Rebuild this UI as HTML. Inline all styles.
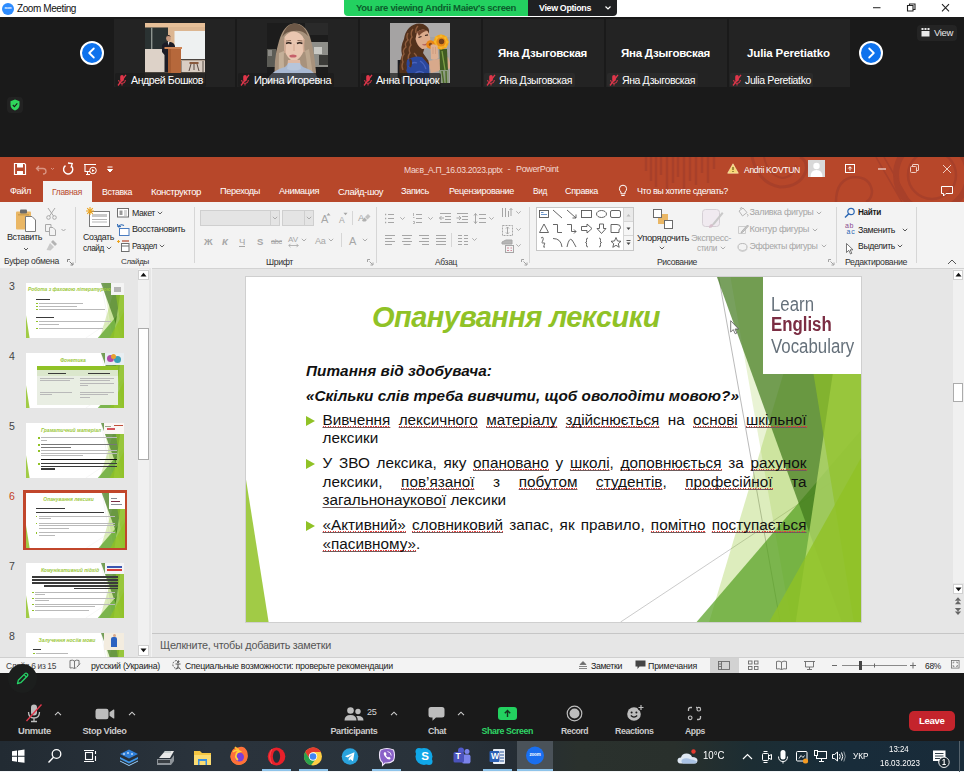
<!DOCTYPE html>
<html lang="uk">
<head>
<meta charset="utf-8">
<title>Zoom Meeting</title>
<style>
html,body{margin:0;padding:0;}
body{width:964px;height:772px;overflow:hidden;position:relative;background:#1a1a1a;font-family:"Liberation Sans","DejaVu Sans",sans-serif;}
.abs{position:absolute;}
.t{position:absolute;white-space:nowrap;line-height:1;}
svg{position:absolute;overflow:visible;}
.tile{position:absolute;top:19px;height:68px;width:121px;background:#232323;overflow:hidden;}
.lblbg{position:absolute;top:73px;height:14px;background:rgba(28,28,28,.72);border-radius:2px;}
.navb{position:absolute;width:20px;height:20px;border-radius:50%;background:#0e72ed;border:2px solid #fff;}
.sep{position:absolute;width:1px;background:#d6d6d6;}
.thumb{position:absolute;left:26px;width:98px;height:55px;background:#fff;overflow:hidden;}
</style>
</head>
<body>
<!-- ============ ZOOM TITLE BAR ============ -->
<div class="abs" style="left:0;top:0;width:964px;height:17px;background:#fff;"></div>
<div class="abs" style="left:2px;top:2.500px;width:12px;height:12px;border-radius:50%;background:#2d8cff;"></div>
<span class="t" style="left:4.5px;top:7.1px;font-size:2.8px;color:#fff;letter-spacing:-0.08px;font-weight:bold;">zoom</span>
<span class="t" style="left:17px;top:3.5px;font-size:10px;color:#111;letter-spacing:-0.41px;">Zoom Meeting</span>
<div class="abs" style="left:344px;top:0;width:184px;height:16px;background:#23d160;border-radius:0 0 0 4px;"></div>
<span class="t" style="left:356px;top:3.0px;font-size:9.5px;color:#0b5e2c;letter-spacing:-0.30px;font-weight:bold;">You are viewing Andrii Maiev's screen</span>
<div class="abs" style="left:528px;top:0;width:89px;height:16px;background:#1f2022;border-radius:0 0 4px 0;"></div>
<span class="t" style="left:539px;top:3.5px;font-size:8.9px;color:#fff;letter-spacing:-0.34px;font-weight:bold;">View Options</span>
<svg style="left:604px;top:5px" width="8" height="6" viewBox="0 0 8 6"><path d="M1.5 1.5 L4 4 L6.5 1.5" fill="none" stroke="#fff" stroke-width="1.2"/></svg>
<!-- window controls -->
<svg style="left:870px;top:0" width="84" height="16" viewBox="0 0 84 16">
 <path d="M3 7.700 H10.500" stroke="#333" stroke-width="1.100" fill="none"/>
 <path d="M37.500 5.500 h5.500 v5.500 h-5.500 z M39.500 5.500 v-1.500 h5.500 v5.500 h-2" stroke="#222" stroke-width="1.100" fill="none"/>
 <path d="M72 4.200 L79 11.300 M79 4.200 L72 11.300" stroke="#222" stroke-width="1.100" fill="none"/>
</svg>

<!-- ============ GALLERY STRIP ============ -->
<div class="navb" style="left:80px;top:41px;"></div>
<svg style="left:80px;top:41px" width="24" height="24" viewBox="0 0 24 24"><path d="M13.8 7.5 L9.2 12 L13.8 16.5" fill="none" stroke="#fff" stroke-width="1.8" stroke-linecap="round" stroke-linejoin="round"/></svg>
<div class="navb" style="left:859px;top:41px;"></div>
<svg style="left:859px;top:41px" width="24" height="24" viewBox="0 0 24 24"><path d="M10.2 7.5 L14.8 12 L10.2 16.5" fill="none" stroke="#fff" stroke-width="1.8" stroke-linecap="round" stroke-linejoin="round"/></svg>

<div class="tile" style="left:114px;"></div>
<div class="tile" style="left:237px;"></div>
<div class="tile" style="left:360px;"></div>
<div class="tile" style="left:483px;"></div>
<div class="tile" style="left:606px;"></div>
<div class="tile" style="left:729px;"></div>

<!-- photo 1 : classroom -->
<svg style="left:145px;top:23px" width="60" height="60" viewBox="0 0 60 60">
 <defs><filter id="bl1" x="-5%" y="-5%" width="110%" height="110%"><feGaussianBlur stdDeviation=".55"/></filter><clipPath id="cp1"><rect width="60" height="60"/></clipPath></defs>
 <g clip-path="url(#cp1)"><g filter="url(#bl1)">
 <rect x="-2" y="-2" width="64" height="64" fill="#dcb691"/>
 <rect x="-2" y="-2" width="64" height="6" fill="#e6bf98"/>
 <rect x="-2" y="4.500" width="25" height="21.500" fill="#2b3132"/>
 <rect x="6" y="4.500" width="1.400" height="21.500" fill="#8d9590"/>
 <rect x="-2" y="26" width="26" height="24" fill="#ddd2c8"/>
 <rect x="29.500" y="8" width="33" height="28" fill="#eef1f1"/>
 <rect x="29.500" y="36" width="33" height="1.500" fill="#4b4540"/>
 <rect x="29.500" y="37.500" width="33" height="12" fill="#d9cdc3"/>
 <rect x="44.500" y="39" width="9" height="2" fill="#8a5a3c"/><path d="M46 41 L44 48 M52 41 L54 48 M49 41 V47" stroke="#5a4a42" stroke-width="1"/>
 <path d="M36 38 V49 M58 38 V49" stroke="#5a5048" stroke-width="1"/>
 <rect x="-2" y="49" width="64" height="13" fill="#4d4641"/>
 <ellipse cx="23.500" cy="15.200" rx="2.300" ry="2.900" fill="#c79a80"/>
 <path d="M21 13.500 Q23.500 10.500 26 13.500 Q23.500 12.500 21 13.500 Z" fill="#2a2220"/>
 <path d="M17 22 Q19 19 22 19 L25.500 19 Q29 19.500 30 23 L30 29 L24 29 L24 49 L19.500 49 L19.500 32 L17 29 Z" fill="#1d1f25"/>
 <path d="M22.800 19 L23.600 22.500 L24.400 19 Z" fill="#e8e8ee"/>
 <path d="M19.500 24 H37 V26 H19.500 Z" fill="#cd8556"/>
 <path d="M23 26 H36 V50 H23 Z" fill="#b6683b"/>
 <path d="M23 26 H26 V50 H23 Z" fill="#a55c32"/>
 </g></g>
</svg>
<!-- photo 2 : girl long hair -->
<svg style="left:267px;top:23px" width="61" height="60" viewBox="0 0 61 60">
 <defs><filter id="bl2" x="-5%" y="-5%" width="110%" height="110%"><feGaussianBlur stdDeviation=".5"/></filter><clipPath id="cp2"><rect width="61" height="60"/></clipPath></defs>
 <g clip-path="url(#cp2)"><g filter="url(#bl2)">
 <rect x="-2" y="-2" width="65" height="64" fill="#1d1d1c"/>
 <rect x="38" y="0" width="24" height="12" fill="#2c2c2b"/>
 <path d="M43 19 H62 V44 H46 Z" fill="#8e8e89"/><rect x="47" y="24" width="8" height="7" fill="#c9c9c4"/><rect x="52" y="32" width="10" height="10" fill="#3a3a38"/>
 <rect x="-2" y="26" width="11" height="18" fill="#5c5b57"/><rect x="1" y="27" width="4" height="6" fill="#8c8b86"/>
 <path d="M8 62 Q6 36 12 18 Q17 1 27 .5 Q38 0 43 14 Q48 30 50 62 Z" fill="#a8927c"/>
 <path d="M15 14 Q19 1 27 .500 Q37 .500 41 13 Q36 7 27 8 Q19 8 15 14 Z" fill="#6d5846"/>
 <path d="M12 30 Q11 46 13 62 L19 62 Q16 44 17 28 Z" fill="#c3af98"/>
 <path d="M38 28 Q41 44 41 62 L47 62 Q45 44 42 26 Z" fill="#bca78f"/>
 <path d="M17.500 14 Q22 8 27 8.500 Q34 9 37 16 L37 27 Q34 36 27 38.500 Q20 36 17.500 27 Z" fill="#e9c6b0"/>
 <path d="M19 20.500 Q21.500 19 24.500 20.500 M30 20.500 Q32.500 19 35.500 20.500" stroke="#2e211b" stroke-width="1.600" fill="none"/><path d="M19 18 L24 17.500 M30.500 17.500 L35.500 18" stroke="#7a5a46" stroke-width=".9"/><path d="M27 21 V28" stroke="#d4a890" stroke-width="1"/><path d="M17.500 16 Q19 24 18 30 M37 16 Q36 24 37 29" stroke="#d3ab94" stroke-width="1.500" fill="none"/>
 <ellipse cx="26" cy="33" rx="3.600" ry="1.500" fill="#c6616b"/>
 <path d="M21 37 L33 37 L34 46 L20 46 Z" fill="#dfb8a2"/>
 <path d="M-2 62 Q2 48 18 44 L22 40 L32 40 L36 44 Q50 48 54 62 Z" fill="#a9b9d2"/>
 <path d="M21 40 L33 40 L34 46 Q27 49 20 46 Z" fill="#b7c5da"/>
 </g></g>
</svg>
<!-- photo 3 : woman with sunflowers -->
<svg style="left:390px;top:23px" width="60" height="60" viewBox="0 0 60 60">
 <defs><filter id="bl3" x="-5%" y="-5%" width="110%" height="110%"><feGaussianBlur stdDeviation=".6"/></filter><clipPath id="cp3"><rect width="60" height="60"/></clipPath></defs>
 <g clip-path="url(#cp3)"><g filter="url(#bl3)">
 <rect x="-2" y="-2" width="64" height="64" fill="#a5a3a3"/>
 <rect x="34" y="-2" width="28" height="16" fill="#adabab"/>
 <rect x="7.700" y="37" width="3.500" height="25" fill="#1f1f21"/>
 <path d="M19 5 Q25 -1 33 1 Q40 4 39 10 L33 30 L40 40 L36 54 L10 54 Q8 42 12 32 Q10 24 14 16 Q15 9 19 5 Z" fill="#52301f"/>
 <path d="M18 10 Q16 14 18 17 Q14 20 16 24 Q12 27 14 31 Q11 35 13 39 Q11 43 13 47 M23 6 Q20 10 22 14 Q19 18 21 22 Q18 26 20 30 Q17 34 19 38 M28 3 Q25 6 26 10 M24 30 Q28 33 26 37 Q30 40 28 44 Q31 47 30 51" stroke="#8e5c3a" stroke-width="1.400" fill="none"/>
 <path d="M27 9 Q32 4.500 37.500 8 Q41 13 40 20 Q38 26.500 32 26 Q27 23 25.500 16 Z" fill="#dcab8c"/>
 <path d="M27 9 Q32 4.500 37.500 8 Q33 8 29 13 Z" fill="#7a4a30"/>
 <path d="M28.500 14.500 L31.500 13.500 M35 12.500 L38 11.800" stroke="#3a241c" stroke-width="1.200"/><path d="M32.500 21.500 Q35.500 22.500 37.500 20.500" stroke="#b05a58" stroke-width="1.200" fill="none"/>
 <path d="M17 37 Q24 32 32 34 L39 42 L40 62 L14 62 Z" fill="#2c469c"/>
 <path d="M19 44 Q22 38 27 40 M24 52 Q28 46 34 50 M30 38 Q34 40 36 46" stroke="#4763bd" stroke-width="1.300" fill="none"/>
 <path d="M14 40 Q17 44 15 48 Q18 52 16 56 M20 36 Q22 40 20 44" stroke="#52301f" stroke-width="2.200" fill="none"/>
 <path d="M38.500 38 L58 34 L62 45 L41 50 Z" fill="#d8a98b"/>
 <path d="M49.500 26 L57 26 L58 48 L50 48 Z" fill="#3f5c22"/><path d="M52 28 L55 47" stroke="#7fa046" stroke-width="1.300"/>
 <path d="M49 47 H59 V62 H49 Z" fill="#8d9c82"/><path d="M52 48 L54 62 M56 48 L56.500 62" stroke="#4f6e2b" stroke-width="1.500"/>
 <circle cx="51" cy="19" r="7.600" fill="#f2a61f"/><path d="M51 11 L53 15 L57 13 L56 17 L59.500 19 L56 21 L57 25 L53 23 L51 27 L49 23 L45 25 L46 21 L42.500 19 L46 17 L45 13 L49 15 Z" fill="#f6b82c"/><circle cx="51" cy="19" r="4.600" fill="#e88a16"/><circle cx="51.500" cy="18.500" r="2.700" fill="#74431a"/>
 <circle cx="40.500" cy="21.500" r="4.300" fill="#e98618"/><circle cx="40.500" cy="21.500" r="1.700" fill="#8a4a18"/>
 <path d="M40.500 22 Q44 20 47.500 23 L48.500 35 Q45 38 41 36 Z" fill="#deb092"/>
 <path d="M43 24 V31 M45.500 24 V31" stroke="#c9977a" stroke-width=".7"/>
 </g></g>
</svg>

<!-- name labels -->
<div class="lblbg" style="left:115px;width:91px;"></div>
<div class="lblbg" style="left:238px;width:96px;"></div>
<div class="lblbg" style="left:361px;width:80px;"></div>
<div class="lblbg" style="left:484px;width:91px;background:#2a2a2a;"></div>
<div class="lblbg" style="left:607px;width:91px;background:#2a2a2a;"></div>
<div class="lblbg" style="left:730px;width:83px;background:#2a2a2a;"></div>
<span class="t" style="left:131px;top:75.0px;font-size:10.6px;color:#fff;letter-spacing:-0.41px;">Андрей Бошков</span>
<span class="t" style="left:254px;top:74.7px;font-size:11px;color:#fff;letter-spacing:-0.46px;">Ирина Игоревна</span>
<span class="t" style="left:376px;top:74.7px;font-size:11px;color:#fff;letter-spacing:-0.47px;">Анна Процюк</span>
<span class="t" style="left:499px;top:75.1px;font-size:10.5px;color:#fff;letter-spacing:-0.39px;">Яна Дзыговская</span>
<span class="t" style="left:622px;top:75.1px;font-size:10.5px;color:#fff;letter-spacing:-0.39px;">Яна Дзыговская</span>
<span class="t" style="left:745px;top:75.1px;font-size:10.5px;color:#fff;letter-spacing:-0.36px;">Julia Peretiatko</span>
<span class="t" style="left:498px;top:48.3px;font-size:11.5px;color:#fff;letter-spacing:-0.25px;font-weight:bold;">Яна Дзыговская</span>
<span class="t" style="left:621px;top:48.3px;font-size:11.5px;color:#fff;letter-spacing:-0.25px;font-weight:bold;">Яна Дзыговская</span>
<span class="t" style="left:747px;top:48.3px;font-size:11.5px;color:#fff;letter-spacing:-0.13px;font-weight:bold;">Julia Peretiatko</span>
<!-- muted mic icons -->
<svg style="left:117px;top:74px" width="740" height="13" viewBox="0 0 740 13">
 <defs><g id="mm"><rect x="3.2" y="1" width="3.6" height="6.5" rx="1.8" fill="#e0364a"/><path d="M1.6 6 Q1.6 9.4 5 9.4 Q8.4 9.4 8.4 6 M5 9.4 V11.5" stroke="#e0364a" stroke-width="1" fill="none"/><path d="M1 11.5 L9 .8" stroke="#e0364a" stroke-width="1.3"/></g></defs>
 <use href="#mm" x="0"/><use href="#mm" x="123"/><use href="#mm" x="246"/><use href="#mm" x="369"/><use href="#mm" x="492"/><use href="#mm" x="615"/>
</svg>

<!-- View button -->
<div class="abs" style="left:917px;top:25px;width:40px;height:16px;background:#242424;border-radius:4px;"></div>
<svg style="left:921px;top:28px" width="9" height="9" viewBox="0 0 9 9"><path d="M.5 0 h2 v2 h-2z M3.5 0 h2 v2 h-2z M6.5 0 h2 v2 h-2z M.5 3 h8 v5.5 h-8z" fill="#e8e8e8"/></svg>
<span class="t" style="left:934px;top:27.7px;font-size:9.5px;color:#e8e8e8;letter-spacing:-0.36px;">View</span>

<!-- shield -->
<div class="abs" style="left:7px;top:97px;width:16px;height:16px;background:#222;border-radius:4px;"></div>
<svg style="left:10px;top:99px" width="10" height="12" viewBox="0 0 10 12"><path d="M5 .5 L9.5 2.2 V6 Q9.5 9.5 5 11.5 Q.5 9.5 .5 6 V2.2 Z" fill="#2fd65c"/><path d="M2.8 6 L4.4 7.6 L7.3 4.4" stroke="#1a1a1a" stroke-width="1.1" fill="none"/></svg>
<!-- ============ POWERPOINT WINDOW ============ -->
<div class="abs" style="left:0;top:157px;width:964px;height:516px;background:#e6e6e6;"></div>
<div class="abs" style="left:0;top:157px;width:964px;height:45px;background:#b7472a;"></div>
<!-- office background art -->
<svg style="left:640px;top:157px" width="324" height="45" viewBox="0 0 324 45">
 <defs><clipPath id="cpt"><rect width="324" height="45"/></clipPath></defs>
 <g clip-path="url(#cpt)" fill="none" stroke="#a8402a">
  <path d="M6 0 V14 M11 0 V24 M16 0 V30 M21 0 V18 M27 0 V32 M33 0 V26 M38 0 V20 M44 0 V34 M50 0 V24 M56 0 V28 M62 0 V16 M68 0 V26 M74 0 V12" stroke-width="2.500"/>
  <path d="M112 0 Q118 26 140 30 Q160 30 166 14 Q168 4 160 0" stroke-width="3"/>
  <path d="M124 0 Q128 18 142 21 Q154 20 156 8" stroke-width="2"/>
  <path d="M196 45 Q196 22 214 20 Q230 20 232 34 Q232 42 226 45" stroke-width="2.500"/>
  <circle cx="292" cy="18" r="36" stroke-width="6"/><circle cx="292" cy="18" r="24" stroke-width="2.500"/>
  <path d="M236 0 L262 45 M244 0 L270 45" stroke-width="1.500"/>
 </g>
</svg>
<!-- QAT -->
<svg style="left:10px;top:161px" width="110" height="16" viewBox="0 0 110 16">
 <path d="M4.5 2.5 h10 l1 1 v10 h-11 z" fill="none" stroke="#fff" stroke-width="1.2"/><rect x="7" y="2.5" width="6" height="4" fill="#fff"/><rect x="7" y="10" width="6" height="3.5" fill="#fff"/>
 <path d="M29 5 L26.5 7.5 L29 10 M27 7.5 H33 Q36 7.5 36 10.5 Q36 13 33 13" fill="none" stroke="#d99583" stroke-width="1.3"/>
 <path d="M41 7 L42.5 8.5 L44 7" fill="none" stroke="#d99583" stroke-width="1"/>
 <path d="M61.5 5.2 A4.6 4.6 0 1 1 55.5 4.6" fill="none" stroke="#fff" stroke-width="1.4"/><path d="M58 2 L62.2 2.6 L61 6.6" fill="none" stroke="#fff" stroke-width="1.3"/>
 <path d="M74 3.5 H86 M75 3.5 V10.5 H80 M77.5 10.5 V13.5 M76 13.5 H80" fill="none" stroke="#fff" stroke-width="1.1"/><circle cx="83" cy="9.5" r="3.3" fill="none" stroke="#fff" stroke-width="1"/><path d="M82 8 L84.5 9.5 L82 11 Z" fill="#fff"/>
 <path d="M97.5 6 H102.5 M97.5 8.5 L100 11 L102.5 8.5 Z" fill="#fff" stroke="#fff" stroke-width="1"/>
</svg>
<span class="t" style="left:404px;top:165.5px;font-size:8.6px;color:#f3d9d1;letter-spacing:-0.33px;">Маєв_А.П_16.03.2023.pptx</span>
<span class="t" style="left:507.5px;top:165.0px;font-size:9.2px;color:#f3d9d1;letter-spacing:-0.06px;">-</span>
<span class="t" style="left:516px;top:165.2px;font-size:9px;color:#f3d9d1;letter-spacing:-0.35px;">PowerPoint</span>
<svg style="left:727px;top:163px" width="12" height="11" viewBox="0 0 12 11"><path d="M6 .8 L11.3 10.2 H.7 Z" fill="#f7d774" stroke="#fff3c4" stroke-width=".6"/><path d="M6 4 V7 M6 8 V9" stroke="#5a4a10" stroke-width="1.1"/></svg>
<span class="t" style="left:744px;top:165.5px;font-size:8.6px;color:#fff;letter-spacing:-0.32px;">Andrii KOVTUN</span>
<div class="abs" style="left:808px;top:160px;width:17px;height:17px;background:#d9d9d9;"></div>
<svg style="left:808px;top:160px" width="17" height="17" viewBox="0 0 17 17"><circle cx="8.5" cy="6" r="3.2" fill="#fff"/><path d="M2.5 17 Q2.5 10 8.5 10 Q14.5 10 14.5 17 Z" fill="#fff"/></svg>
<svg style="left:843px;top:162px" width="112" height="14" viewBox="0 0 112 14">
 <rect x="2.5" y="2.5" width="9" height="8" fill="none" stroke="#fff" stroke-width="1"/><path d="M7 8.5 V5 M5.3 6.5 L7 4.7 L8.7 6.5" stroke="#fff" stroke-width="1" fill="none"/>
 <path d="M35 7 H43" stroke="#fff" stroke-width="1"/>
 <rect x="67.5" y="4.500" width="6" height="6" rx="1" fill="none" stroke="#f0cfc5" stroke-width="1"/><path d="M69.500 4.500 V3 Q69.500 2.500 70 2.500 H75 Q75.500 2.500 75.500 3 V8 Q75.500 8.500 75 8.500 H73.500" fill="none" stroke="#f0cfc5" stroke-width="1"/>
 <path d="M100 3 L108 11 M108 3 L100 11" stroke="#f0cfc5" stroke-width="1"/>
</svg>
<!-- tabs -->
<div class="abs" style="left:43px;top:181px;width:49px;height:21px;background:#f3f3f3;"></div>
<span class="t" style="left:10px;top:187.2px;font-size:9.2px;color:#fff;letter-spacing:-0.40px;">Файл</span>
<span class="t" style="left:52px;top:187.9px;font-size:8.4px;color:#b7472a;letter-spacing:-0.27px;">Главная</span>
<span class="t" style="left:102px;top:187.6px;font-size:8.8px;color:#fff;letter-spacing:-0.39px;">Вставка</span>
<span class="t" style="left:151px;top:186.9px;font-size:9.6px;color:#fff;letter-spacing:-0.43px;">Конструктор</span>
<span class="t" style="left:220px;top:187.2px;font-size:9.2px;color:#fff;letter-spacing:-0.39px;">Переходы</span>
<span class="t" style="left:279px;top:187.2px;font-size:9.2px;color:#fff;letter-spacing:-0.39px;">Анимация</span>
<span class="t" style="left:338px;top:187.0px;font-size:9.4px;color:#fff;letter-spacing:-0.40px;">Слайд-шоу</span>
<span class="t" style="left:401px;top:187.2px;font-size:9.2px;color:#fff;letter-spacing:-0.36px;">Запись</span>
<span class="t" style="left:449px;top:187.4px;font-size:9px;color:#fff;letter-spacing:-0.32px;">Рецензирование</span>
<span class="t" style="left:533px;top:188.1px;font-size:8.2px;color:#fff;letter-spacing:-0.27px;">Вид</span>
<span class="t" style="left:565px;top:187.4px;font-size:9px;color:#fff;letter-spacing:-0.33px;">Справка</span>
<svg style="left:618px;top:184px" width="10" height="14" viewBox="0 0 10 14"><path d="M5 1.2 Q8.6 1.2 8.6 4.7 Q8.6 6.5 7 8 V9.8 H3 V8 Q1.4 6.5 1.4 4.700 Q1.4 1.2 5 1.2 Z M3.3 11.5 H6.7" fill="none" stroke="#fff" stroke-width="1"/></svg>
<span class="t" style="left:637px;top:187.4px;font-size:9px;color:#fff;letter-spacing:-0.39px;">Что вы хотите сделать?</span>
<svg style="left:940px;top:185px" width="14" height="13" viewBox="0 0 14 13"><path d="M1.5 1.5 H12.5 V8.5 H6 L3.5 11 V8.5 H1.5 Z" fill="none" stroke="#fff" stroke-width="1"/></svg>
<!-- ============ RIBBON ============ -->
<div class="abs" style="left:0;top:202px;width:964px;height:66.600px;background:#f3f3f3;border-bottom:1px solid #d2d2d2;box-sizing:border-box;"></div>
<div class="sep" style="left:75px;top:207px;height:56px;"></div>
<div class="sep" style="left:194px;top:207px;height:56px;"></div>
<div class="sep" style="left:376px;top:207px;height:56px;"></div>
<div class="sep" style="left:529px;top:207px;height:56px;"></div>
<div class="sep" style="left:836px;top:207px;height:56px;"></div>
<div class="sep" style="left:916px;top:207px;height:56px;"></div>
<div class="sep" style="left:352px;top:211px;height:14px;"></div>
<div class="sep" style="left:341px;top:233px;height:14px;"></div>
<div class="sep" style="left:451px;top:233px;height:14px;"></div>

<!-- Clipboard group -->
<svg style="left:14px;top:207px" width="60" height="46" viewBox="0 0 60 46">
 <rect x="2" y="4.500" width="15" height="18" rx="1" fill="#eab765"/><rect x="6" y="2.500" width="7" height="4" rx="1" fill="#6b6b6b"/><rect x="4" y="7" width="11" height="1.500" fill="#cfa050"/>
 <path d="M11.500 9.500 H18 L21.500 13 V24.500 H11.500 Z" fill="#fff" stroke="#7a7a7a" stroke-width="1"/>
 <path d="M10 41 L12 43 L14 41" fill="none" stroke="#555" stroke-width="1"/>
 <!-- scissors (disabled) -->
 <g stroke="#a9a9a9" fill="none" stroke-width="1"><path d="M34 1 L39.500 9 M41 1 L35.500 9"/><circle cx="34.500" cy="10.500" r="1.800"/><circle cx="40.500" cy="10.500" r="1.800"/></g>
 <!-- copy (disabled) -->
 <g stroke="#a9a9a9" fill="none" stroke-width="1"><path d="M31.500 17.500 H37 V24.500 H31.500 Z"/><path d="M35.500 20.500 H39 L41.500 23 V28.500 H35.500 Z" fill="#f3f3f3"/></g>
 <path d="M47.500 22 L49.500 24 L51.500 22" fill="none" stroke="#a9a9a9" stroke-width="1"/>
 <!-- format painter (disabled) -->
 <g fill="#b3b3b3"><path d="M39 33 L43 37 L41 39 L37 35 Z"/><path d="M36 36 L40 40 L36.500 43.500 L32.500 43 Z" fill="#c9c9c9"/></g>
</svg>
<span class="t" style="left:7px;top:232.9px;font-size:9px;color:#262626;letter-spacing:-0.39px;">Вставить</span>
<span class="t" style="left:4px;top:257.2px;font-size:8.6px;color:#333;letter-spacing:-0.28px;">Буфер обмена</span>
<svg style="left:67px;top:259px" width="7" height="7" viewBox="0 0 7 7"><path d="M.5 .5 H3 M.5 .5 V3 M2.500 2.500 L5.500 5.500 M6 3.500 V6 H3.500" fill="none" stroke="#777" stroke-width=".9"/></svg>

<!-- Slides group -->
<svg style="left:84px;top:206px" width="50" height="50" viewBox="0 0 50 50">
 <rect x="5.500" y="5.500" width="20" height="15" fill="#fff" stroke="#7a7a7a" stroke-width="1"/><rect x="8" y="8" width="15" height="3" fill="#c8c8c8"/><path d="M8 13.500 H23 M8 16 H23" stroke="#b5b5b5" stroke-width="1"/>
 <path d="M6 1 V9 M2 5 H10 M3.200 2.200 L8.800 7.800 M8.800 2.200 L3.200 7.800" stroke="#eda41d" stroke-width="1.100"/>
 <!-- layout icon -->
 <rect x="33.500" y="2.500" width="11" height="8.500" fill="#fff" stroke="#6f6f6f" stroke-width="1"/><rect x="35.500" y="4.500" width="3" height="4.500" fill="#9a9a9a"/><path d="M40 5 H43 M40 7 H43 M40 9 H43" stroke="#9a9a9a" stroke-width=".8"/>
 <!-- reset icon -->
 <rect x="35.500" y="22.500" width="9.500" height="7" fill="#fff" stroke="#4a7cc0" stroke-width="1"/><path d="M34 21 Q36 17.500 40 19.500 M34 21 L33.500 18 M34 21 L37 20.500" stroke="#2b67b3" fill="none" stroke-width="1.100"/>
 <!-- section icon -->
 <rect x="37.500" y="37.500" width="7.500" height="8" fill="#fff" stroke="#6f6f6f" stroke-width="1"/><path d="M37.500 40 H45" stroke="#6f6f6f" stroke-width="1"/><path d="M33 35.500 H36 M34.500 34 V37" stroke="#eda41d" stroke-width="1.100"/><path d="M38 35 H45" stroke="#b7472a" stroke-width="1.200"/>
</svg>
<span class="t" style="left:83px;top:233.1px;font-size:8.8px;color:#262626;letter-spacing:-0.35px;">Создать</span>
<span class="t" style="left:83px;top:244.6px;font-size:8.2px;color:#262626;letter-spacing:-0.36px;">слайд</span>
<svg style="left:106px;top:246px" width="6" height="4" viewBox="0 0 6 4"><path d="M.8 .8 L3 3 L5.200 .8" fill="none" stroke="#555" stroke-width=".9"/></svg>
<span class="t" style="left:132px;top:208.6px;font-size:8.8px;color:#262626;letter-spacing:-0.38px;">Макет</span>
<svg style="left:157px;top:211px" width="6" height="4" viewBox="0 0 6 4"><path d="M.8 .8 L3 3 L5.200 .8" fill="none" stroke="#555" stroke-width=".9"/></svg>
<span class="t" style="left:132px;top:225.4px;font-size:9px;color:#262626;letter-spacing:-0.39px;">Восстановить</span>
<span class="t" style="left:132px;top:242.6px;font-size:8.2px;color:#262626;letter-spacing:-0.34px;">Раздел</span>
<svg style="left:159px;top:244px" width="6" height="4" viewBox="0 0 6 4"><path d="M.8 .8 L3 3 L5.200 .8" fill="none" stroke="#555" stroke-width=".9"/></svg>
<span class="t" style="left:121px;top:258.2px;font-size:8px;color:#333;letter-spacing:-0.30px;">Слайды</span>

<!-- Font group -->
<div class="abs" style="left:200px;top:210px;width:80px;height:16px;background:#e4e4e4;border:1px solid #cfcfcf;box-sizing:border-box;"></div>
<div class="abs" style="left:270px;top:210px;width:1px;height:16px;background:#cfcfcf;"></div>
<div class="abs" style="left:282px;top:210px;width:32px;height:16px;background:#e4e4e4;border:1px solid #cfcfcf;box-sizing:border-box;"></div>
<div class="abs" style="left:304px;top:210px;width:1px;height:16px;background:#cfcfcf;"></div>
<svg style="left:272px;top:216px" width="6" height="4" viewBox="0 0 6 4"><path d="M.8 .8 L3 3 L5.200 .8" fill="none" stroke="#a6a6a6" stroke-width=".9"/></svg>
<svg style="left:306px;top:216px" width="6" height="4" viewBox="0 0 6 4"><path d="M.8 .8 L3 3 L5.200 .8" fill="none" stroke="#a6a6a6" stroke-width=".9"/></svg>
<span class="t" style="left:321px;top:213.7px;font-size:11px;color:#a6a6a6;letter-spacing:-0.34px;">A</span>
<svg style="left:326px;top:212px" width="5" height="4" viewBox="0 0 5 4"><path d="M.5 3.500 L2.500 1 L4.500 3.500 Z" fill="#a6a6a6"/></svg>
<span class="t" style="left:339px;top:215.8px;font-size:8.5px;color:#a6a6a6;letter-spacing:-0.17px;">A</span>
<svg style="left:343px;top:212px" width="5" height="4" viewBox="0 0 5 4"><path d="M.5 .8 L2.500 3.300 L4.500 .8 Z" fill="#a6a6a6"/></svg>
<span class="t" style="left:358px;top:213.0px;font-size:9.5px;color:#a6a6a6;letter-spacing:-0.34px;">A</span>
<svg style="left:360px;top:213px" width="11" height="11" viewBox="0 0 11 11"><path d="M5 4 L8 1 L10.500 3.500 L7.500 6.500 Z" fill="#c2c2c2"/><path d="M4.500 4.500 L7 7 L5.500 8.500 H3 L2 7.500 Z" fill="#b0b0b0"/></svg>
<span class="t" style="left:204px;top:237.0px;font-size:9.5px;color:#a6a6a6;letter-spacing:-0.59px;font-weight:bold;">Ж</span>
<span class="t" style="left:222px;top:237.0px;font-size:9.5px;color:#a6a6a6;letter-spacing:0.16px;font-weight:bold;font-style:italic;">К</span>
<span class="t" style="left:239px;top:237.0px;font-size:9.5px;color:#a6a6a6;letter-spacing:-0.34px;"><u>Ч</u></span>
<span class="t" style="left:257px;top:237.0px;font-size:9.5px;color:#a6a6a6;letter-spacing:-0.84px;font-weight:bold;">S</span>
<span class="t" style="left:271px;top:238.2px;font-size:7.4px;color:#a6a6a6;letter-spacing:-0.31px;"><s>abc</s></span>
<span class="t" style="left:288px;top:235.7px;font-size:8px;color:#a6a6a6;letter-spacing:-0.04px;">AV</span>
<svg style="left:288px;top:243px" width="11" height="5" viewBox="0 0 11 5"><path d="M.8 2.500 H10.200 M2.500 .8 L.8 2.500 L2.500 4.200 M8.500 .8 L10.200 2.500 L8.500 4.200" fill="none" stroke="#a6a6a6" stroke-width=".8"/></svg>
<svg style="left:301px;top:238px" width="6" height="4" viewBox="0 0 6 4"><path d="M.8 .8 L3 3 L5.200 .8" fill="none" stroke="#a6a6a6" stroke-width=".9"/></svg>
<span class="t" style="left:315px;top:237.3px;font-size:9.1px;color:#a6a6a6;letter-spacing:-0.31px;">Aa</span>
<svg style="left:328px;top:238px" width="6" height="4" viewBox="0 0 6 4"><path d="M.8 .8 L3 3 L5.200 .8" fill="none" stroke="#a6a6a6" stroke-width=".9"/></svg>
<span class="t" style="left:349px;top:236.2px;font-size:11px;color:#a6a6a6;letter-spacing:0.16px;">A</span>
<svg style="left:362px;top:238px" width="6" height="4" viewBox="0 0 6 4"><path d="M.8 .8 L3 3 L5.200 .8" fill="none" stroke="#a6a6a6" stroke-width=".9"/></svg>
<span class="t" style="left:266px;top:257.6px;font-size:8.8px;color:#333;letter-spacing:-0.39px;">Шрифт</span>
<svg style="left:367px;top:259px" width="7" height="7" viewBox="0 0 7 7"><path d="M.5 .5 H3 M.5 .5 V3 M2.500 2.500 L5.500 5.500 M6 3.500 V6 H3.500" fill="none" stroke="#9a9a9a" stroke-width=".9"/></svg>

<!-- Paragraph group -->
<svg style="left:383px;top:206px" width="145" height="50" viewBox="0 0 145 50">
 <g stroke="#a6a6a6" fill="none" stroke-width="1">
  <!-- bullets -->
  <path d="M5 8.500 H11 M5 12.500 H11 M5 16.500 H11"/><path d="M2 8.500 H3.200 M2 12.500 H3.200 M2 16.500 H3.200" stroke-width="1.400"/>
  <path d="M17.300 11.300 L19.500 13.500 L21.700 11.300" stroke-width=".9"/>
  <!-- numbering -->
  <path d="M33 8.500 H39 M33 12.500 H39 M33 16.500 H39"/><path d="M30.500 7 V10 M30 11.500 H31.500 M30 15.500 H31.500 V17.500 H30" stroke-width=".8"/>
  <path d="M45.300 11.300 L47.500 13.500 L49.700 11.300" stroke-width=".9"/>
  <!-- decrease indent -->
  <path d="M57 7.500 H68 M62 10.500 H68 M62 13.500 H68 M57 16.500 H68 M61 12 H56.500 M58.500 10 L56.500 12 L58.500 14"/>
  <!-- increase indent -->
  <path d="M74 7.500 H85 M79 10.500 H85 M79 13.500 H85 M74 16.500 H85 M73.500 12 H78 M76 10 L78 12 L76 14"/>
  <!-- line spacing -->
  <path d="M96 8.500 H103 M96 12.500 H103 M96 16.500 H103 M92.500 7.500 V17.500 M91 9.500 L92.500 7.500 L94 9.500 M91 15.500 L92.500 17.500 L94 15.500"/>
  <path d="M106.300 11.300 L108.500 13.500 L110.700 11.300" stroke-width=".9"/>
  <!-- text direction -->
  <path d="M119.500 2 V11 M122.500 2 V11 M125.500 5 V11 M128 2.500 V10 M126.500 4 L128 2.500 L129.500 4"/>
  <path d="M133.300 5.300 L135.500 7.500 L137.700 5.300" stroke-width=".9"/>
  <!-- align text -->
  <rect x="119.500" y="19.500" width="10" height="10" stroke-dasharray="2 1"/><path d="M124.500 21 V28 M123 22.500 L124.500 21 L126 22.500 M123 26.500 L124.500 28 L126 26.500"/>
  <path d="M133.300 22.300 L135.500 24.500 L137.700 22.300" stroke-width=".9"/>
  <!-- smartart -->
  <path d="M119 36 L123 34 H129 V38 H119 Z" fill="#b5b5b5"/><rect x="122.500" y="39.500" width="8" height="7" fill="#f3f3f3"/><path d="M124 42 H126 M127.500 42 H129 M124 44.500 H126 M127.500 44.500 H129" stroke="#d08a9a"/>
  <path d="M133.300 38.300 L135.500 40.500 L137.700 38.300" stroke-width=".9"/>
  <!-- align row -->
  <path d="M2 29.500 H12 M2 32.500 H9 M2 35.500 H12 M2 38.500 H9"/>
  <path d="M19 29.500 H29 M20.500 32.500 H27.500 M19 35.500 H29 M20.500 38.500 H27.500"/>
  <path d="M36 29.500 H46 M39 32.500 H46 M36 35.500 H46 M39 38.500 H46"/>
  <path d="M53 29.500 H63 M53 32.500 H63 M53 35.500 H63 M53 38.500 H63"/>
  <path d="M75 29.500 H79 M75 32.500 H79 M75 35.500 H79 M75 38.500 H79 M81 29.500 H85 M81 32.500 H85 M81 35.500 H85 M81 38.500 H85"/>
  <path d="M89.300 32.300 L91.500 34.500 L93.700 32.300" stroke-width=".9"/>
 </g>
</svg>
<span class="t" style="left:435px;top:257.9px;font-size:8.4px;color:#333;letter-spacing:-0.30px;">Абзац</span>
<svg style="left:521px;top:259px" width="7" height="7" viewBox="0 0 7 7"><path d="M.5 .5 H3 M.5 .5 V3 M2.500 2.500 L5.500 5.500 M6 3.500 V6 H3.500" fill="none" stroke="#9a9a9a" stroke-width=".9"/></svg>

<!-- Drawing group -->
<div class="abs" style="left:536px;top:207px;width:98px;height:44px;background:#fff;border:1px solid #c6c6c6;box-sizing:border-box;"></div>
<div class="abs" style="left:623px;top:208px;width:10px;height:14px;background:#e9e9e9;border-left:1px solid #d6d6d6;border-bottom:1px solid #d6d6d6;box-sizing:border-box;"></div>
<div class="abs" style="left:623px;top:222px;width:10px;height:14px;background:#f6f6f6;border-left:1px solid #d6d6d6;border-bottom:1px solid #d6d6d6;box-sizing:border-box;"></div>
<div class="abs" style="left:623px;top:236px;width:10px;height:14px;background:#f6f6f6;border-left:1px solid #d6d6d6;box-sizing:border-box;"></div>
<svg style="left:536px;top:207px" width="98" height="44" viewBox="0 0 98 44">
 <g stroke="#555" fill="none" stroke-width=".9">
  <rect x="3.500" y="3.500" width="9" height="7"/><path d="M5 5.500 H7.500 M5 7.500 H11" stroke-width=".7" stroke="#2b67b3"/>
  <path d="M17 3 L26 11"/>
  <path d="M31 3 L40 11 M40 7.500 V11 H36.500"/>
  <rect x="45.500" y="3.500" width="10" height="7"/>
  <ellipse cx="65.500" cy="7" rx="5" ry="3.500"/>
  <rect x="74.500" y="3.500" width="10" height="7" rx="1.500"/>
  <path d="M8 17 L12.500 25.500 H3.500 Z"/>
  <path d="M17 17.500 H21.500 V25.500 H26"/>
  <path d="M31 17.500 H35.500 V24.500 H40 M38 22.500 L40 24.500 L38 26.500"/>
  <path d="M45.500 19.500 H51 V17 L56 21.500 L51 26 V23.500 H45.500 Z"/>
  <path d="M63.500 17 H67.500 V21.500 H70 L65.500 26.500 L61 21.500 H63.500 Z"/>
  <path d="M75 17.500 H81 Q84.500 17.500 84.500 20.500 Q84.500 22 83 22.500 V25.500 H75 Z"/>
  <path d="M5 31 Q8 29 7 33 Q5 37 7.500 36 Q9.500 35 8 38.500 Q7 41 9 40"/>
  <path d="M17 31.500 Q25 31.500 26 40"/>
  <path d="M31 40 Q33 30 36 33 Q38 36 40 40"/>
  <path d="M52 31 Q50 31 50.500 33.500 Q51 35.500 49.500 35.500 Q51 35.500 50.500 37.500 Q50 40 52 40"/>
  <path d="M63 31 Q65 31 64.500 33.500 Q64 35.500 65.500 35.500 Q64 35.500 64.500 37.500 Q65 40 63 40"/>
  <path d="M80 30.500 L81.500 34 L85 34.300 L82.300 36.700 L83.200 40.300 L80 38.300 L76.800 40.300 L77.700 36.700 L75 34.300 L78.500 34 Z"/>
 </g>
 <path d="M90.500 9.500 L92.500 7 L94.500 9.500 Z" fill="#b9b9b9"/>
 <path d="M90.500 20.500 L92.500 23 L94.500 20.500 Z" fill="#444"/>
 <path d="M90.500 33.500 H94.500" stroke="#444" stroke-width=".9"/><path d="M90.500 35.500 L92.500 38 L94.500 35.500 Z" fill="#444"/>
</svg>
<!-- arrange -->
<svg style="left:651px;top:207px" width="24" height="24" viewBox="0 0 24 24">
 <rect x="7" y="7" width="10" height="10" fill="#eab765"/><rect x="2.500" y="2.500" width="8" height="8" fill="#fff" stroke="#6a6a6a"/><rect x="13.500" y="13.500" width="8" height="8" fill="#fff" stroke="#6a6a6a"/>
</svg>
<span class="t" style="left:637px;top:232.5px;font-size:9.4px;color:#262626;letter-spacing:-0.35px;">Упорядочить</span>
<svg style="left:659px;top:246px" width="6" height="4" viewBox="0 0 6 4"><path d="M.8 .8 L3 3 L5.200 .8" fill="none" stroke="#555" stroke-width=".9"/></svg>
<!-- quick styles (disabled) -->
<svg style="left:700px;top:206px" width="26" height="26" viewBox="0 0 26 26">
 <rect x="2.500" y="3.500" width="17" height="17" rx="3" fill="#f0eaf0" stroke="#d5cfd5"/><path d="M22 6 L13 17 L11 20 L14.500 18.500 L23.500 7.500 Z" fill="#c9c9c9"/><path d="M11.500 18 Q9 18.500 9 22 Q12 22 13.500 19.500 Z" fill="#d7c0cc"/>
</svg>
<span class="t" style="left:691px;top:232.5px;font-size:9.4px;color:#a6a6a6;letter-spacing:-0.40px;">Экспресс-</span>
<span class="t" style="left:697px;top:244.6px;font-size:8.2px;color:#a6a6a6;letter-spacing:-0.36px;">стили</span>
<svg style="left:720px;top:246px" width="6" height="4" viewBox="0 0 6 4"><path d="M.8 .8 L3 3 L5.200 .8" fill="none" stroke="#a6a6a6" stroke-width=".9"/></svg>
<svg style="left:736px;top:206px" width="14" height="48" viewBox="0 0 14 48">
 <g stroke="#b0b0b0" fill="none" stroke-width=".9">
  <path d="M3 5 L7 2 L11 6.500 L6.500 10 Z M4 3 Q5 0 6.500 2.500 M11.500 8 Q12.500 10 11.500 10.500"/>
  <path d="M2.500 20.500 H9.500 V27.500 H2.500 Z" stroke="#c8c8c8"/><path d="M11.500 19 L6 25 L5 27 L7 26 L12.500 20 Z" fill="#c8c8c8"/>
  <ellipse cx="6.500" cy="41" rx="4.500" ry="3.500"/><path d="M3 43.500 Q7 47 11 43" stroke="#cfcfcf" stroke-width="1.500"/>
 </g>
</svg>
<span class="t" style="left:749.5px;top:208.4px;font-size:9px;color:#a6a6a6;letter-spacing:-0.34px;">Заливка фигуры</span>
<svg style="left:816px;top:211px" width="6" height="4" viewBox="0 0 6 4"><path d="M.8 .8 L3 3 L5.200 .8" fill="none" stroke="#a6a6a6" stroke-width=".9"/></svg>
<span class="t" style="left:749.5px;top:225.2px;font-size:9.2px;color:#a6a6a6;letter-spacing:-0.37px;">Контур фигуры</span>
<svg style="left:811.500px;top:228px" width="6" height="4" viewBox="0 0 6 4"><path d="M.8 .8 L3 3 L5.200 .8" fill="none" stroke="#a6a6a6" stroke-width=".9"/></svg>
<span class="t" style="left:749.5px;top:242.1px;font-size:8.8px;color:#a6a6a6;letter-spacing:-0.38px;">Эффекты фигуры</span>
<svg style="left:820.500px;top:244px" width="6" height="4" viewBox="0 0 6 4"><path d="M.8 .8 L3 3 L5.200 .8" fill="none" stroke="#a6a6a6" stroke-width=".9"/></svg>
<span class="t" style="left:657px;top:257.7px;font-size:8.6px;color:#333;letter-spacing:-0.36px;">Рисование</span>
<svg style="left:828px;top:259px" width="7" height="7" viewBox="0 0 7 7"><path d="M.5 .5 H3 M.5 .5 V3 M2.500 2.500 L5.500 5.500 M6 3.500 V6 H3.500" fill="none" stroke="#9a9a9a" stroke-width=".9"/></svg>

<!-- Editing group -->
<svg style="left:843px;top:206px" width="16" height="48" viewBox="0 0 16 48">
 <circle cx="8" cy="5.500" r="3.200" fill="none" stroke="#2b67b3" stroke-width="1.200"/><path d="M5.800 7.800 L2 11.500" stroke="#2b67b3" stroke-width="1.500"/>
 <path d="M3.500 37.500 V46.500 L5.800 44.300 L7.500 48 L8.800 47.300 L7.200 43.800 H10 Z" fill="#fff" stroke="#555" stroke-width=".8"/>
</svg>
<span class="t" style="left:845px;top:221.6px;font-size:7px;color:#8a4a90;letter-spacing:0.60px;">ab</span>
<span class="t" style="left:846.5px;top:227.6px;font-size:7px;color:#2b67b3;letter-spacing:0.80px;">ac</span>
<span class="t" style="left:858px;top:209.1px;font-size:8.2px;color:#1a1a1a;letter-spacing:-0.31px;font-weight:bold;">Найти</span>
<span class="t" style="left:858px;top:225.6px;font-size:8.8px;color:#1a1a1a;letter-spacing:-0.32px;">Заменить</span>
<svg style="left:902px;top:228px" width="6" height="4" viewBox="0 0 6 4"><path d="M.8 .8 L3 3 L5.200 .8" fill="none" stroke="#444" stroke-width=".9"/></svg>
<span class="t" style="left:858px;top:242.2px;font-size:8.6px;color:#1a1a1a;letter-spacing:-0.33px;">Выделить</span>
<svg style="left:897px;top:244px" width="6" height="4" viewBox="0 0 6 4"><path d="M.8 .8 L3 3 L5.200 .8" fill="none" stroke="#444" stroke-width=".9"/></svg>
<span class="t" style="left:845px;top:257.6px;font-size:8.8px;color:#333;letter-spacing:-0.36px;">Редактирование</span>
<svg style="left:947px;top:259px" width="10" height="6" viewBox="0 0 10 6"><path d="M1 5 L5 1 L9 5" fill="none" stroke="#555" stroke-width="1"/></svg>
<!-- ============ THUMBNAIL PANEL ============ -->
<div class="abs" style="left:0;top:268px;width:151px;height:389px;background:#e6e6e6;"></div>
<div class="abs" style="left:138px;top:269px;width:11px;height:388px;background:#f0f0f0;"></div>
<div class="abs" style="left:151px;top:268px;width:1px;height:389px;background:#f2f2f2;"></div>
<div class="abs" style="left:138px;top:270px;width:11px;height:10px;background:#fff;border:1px solid #d0d0d0;box-sizing:border-box;"></div>
<svg style="left:140px;top:272px" width="7" height="5" viewBox="0 0 7 5"><path d="M.5 4.500 L3.500 .8 L6.500 4.500 Z" fill="#111"/></svg>
<div class="abs" style="left:138px;top:328px;width:11px;height:132px;background:#fff;border:1px solid #ababab;box-sizing:border-box;"></div>
<div class="abs" style="left:138px;top:645px;width:11px;height:10.500px;background:#fff;border:1px solid #d0d0d0;box-sizing:border-box;"></div>
<svg style="left:140px;top:648.300px" width="7" height="5" viewBox="0 0 7 5"><path d="M.5 .5 L3.500 4.200 L6.500 .5 Z" fill="#111"/></svg>
<style>
.th{position:absolute;left:26px;width:98px;height:55px;overflow:hidden;background:#fff;}
.th svg.bg{left:0;top:0;}
.th .ti{position:absolute;left:0;width:78px;text-align:center;top:5px;font-size:5.200px;line-height:1;color:#9cc83c;font-weight:bold;font-style:italic;white-space:nowrap;}
.th .ln{position:absolute;height:1px;background:#b9b9b9;}
.th .lb{position:absolute;height:1.500px;background:#3a3a3a;}
.th .bu{position:absolute;width:1.500px;height:1.500px;background:#90c226;}
.tn{position:absolute;left:9px;font-size:10.500px;line-height:1;color:#444;}
</style>
<div class="tn" style="top:281.3px">3</div>
<div class="tn" style="top:351.3px">4</div>
<div class="tn" style="top:421.3px">5</div>
<div class="tn" style="top:491.3px;color:#c43e1c">6</div>
<div class="tn" style="top:561.3px">7</div>
<div class="tn" style="top:631.3px">8</div>

<!-- thumb 3 -->
<div class="th" style="top:282.600px">
 <svg class="bg" width="98" height="55"><use href="#facet" width="98" height="55"/></svg>
 <div class="abs" style="left:85px;top:0;width:13px;height:12px;background:#f4f4f4;"></div>
 <div class="abs" style="left:88px;top:4px;width:7px;height:5px;background:#8a8a8a;opacity:.6"></div>
 <div class="ti" style="left:2px;width:76px;font-size:4.900px;">Робота з фаховою літературою</div>
 <div class="lb" style="left:10px;top:16px;width:14px;height:1px"></div>
 <div class="bu" style="left:10px;top:20px"></div><div class="ln" style="left:13px;top:20px;width:44px"></div>
 <div class="bu" style="left:10px;top:23px"></div><div class="ln" style="left:13px;top:23px;width:38px"></div>
 <div class="bu" style="left:10px;top:26px"></div><div class="ln" style="left:13px;top:26px;width:66px"></div>
 <div class="lb" style="left:10px;top:34px;width:18px;height:1px"></div>
 <div class="bu" style="left:10px;top:38px"></div><div class="ln" style="left:13px;top:38px;width:72px"></div><div class="ln" style="left:13px;top:41px;width:20px"></div>
 <div class="bu" style="left:10px;top:45px"></div><div class="ln" style="left:13px;top:45px;width:64px"></div>
</div>
<!-- thumb 4 -->
<div class="th" style="top:352.600px">
 <svg class="bg" width="98" height="55"><use href="#facet" width="98" height="55"/></svg>
 <div class="abs" style="left:79px;top:0;width:19px;height:12px;background:#e8eef2;"></div>
 <div class="abs" style="left:81px;top:2px;width:7px;height:7px;border-radius:50%;background:#b04aa8;"></div>
 <div class="abs" style="left:88px;top:3px;width:7px;height:7px;border-radius:50%;background:#3aa0b8;"></div>
 <div class="abs" style="left:85px;top:1px;width:5px;height:5px;border-radius:50%;background:#e8a030;"></div>
 <div class="ti" style="left:8px;width:78px;font-size:5px;">Фонетика</div>
 <div class="abs" style="left:11px;top:13px;width:81px;height:39px;background:#e9eee3;"></div>
 <div class="abs" style="left:11px;top:13px;width:81px;height:4px;background:#90c226;"></div>
 <div class="abs" style="left:11px;top:17px;width:81px;height:6px;background:#dbe7cc;"></div>
 <div class="lb" style="left:22px;top:20px;width:18px;height:1px"></div><div class="lb" style="left:62px;top:20px;width:22px;height:1px"></div>
 <div class="ln" style="left:14px;top:25px;width:34px"></div><div class="ln" style="left:14px;top:27.500px;width:30px"></div>
 <div class="ln" style="left:54px;top:25px;width:34px"></div><div class="ln" style="left:54px;top:27.500px;width:30px"></div><div class="ln" style="left:54px;top:30px;width:34px"></div><div class="ln" style="left:54px;top:32.500px;width:8px"></div>
 <div class="ln" style="left:14px;top:39px;width:32px"></div><div class="ln" style="left:14px;top:41.500px;width:12px"></div>
 <div class="ln" style="left:54px;top:39px;width:34px"></div><div class="ln" style="left:54px;top:41.500px;width:28px"></div><div class="ln" style="left:54px;top:44px;width:10px"></div>
</div>
<!-- thumb 5 -->
<div class="th" style="top:422.600px">
 <svg class="bg" width="98" height="55"><use href="#facet" width="98" height="55"/></svg>
 <div class="abs" style="left:78px;top:0;width:20px;height:11px;background:#faf6f4;"></div>
 <div class="abs" style="left:88px;top:2px;width:9px;height:1.500px;background:#c0503c;"></div><div class="abs" style="left:81px;top:5.500px;width:8px;height:2px;background:#d4555c;"></div><div class="abs" style="left:79px;top:3px;width:6px;height:1px;background:#9aa88a;"></div>
 <div class="ti" style="left:6px;width:78px;font-size:5px;">Граматичний матеріал</div>
 <div class="bu" style="left:12px;top:14.500px"></div><div class="ln" style="left:15px;top:14.500px;width:76px"></div><div class="ln" style="left:15px;top:17px;width:6px"></div>
 <div class="bu" style="left:12px;top:21.500px"></div><div class="ln" style="left:15px;top:21.500px;width:76px;background:#777"></div><div class="ln" style="left:15px;top:24px;width:30px;background:#777"></div>
 <div class="bu" style="left:12px;top:27.500px"></div><div class="ln" style="left:15px;top:27.500px;width:76px"></div><div class="ln" style="left:15px;top:30px;width:76px"></div><div class="ln" style="left:15px;top:32.800px;width:42px"></div>
 <div class="lb" style="left:15px;top:36px;width:76px;height:1.600px;background:#111"></div>
 <div class="bu" style="left:12px;top:40.500px"></div><div class="lb" style="left:15px;top:40.300px;width:76px;height:1.200px"></div><div class="lb" style="left:15px;top:43px;width:76px;height:1.200px"></div><div class="lb" style="left:15px;top:45.800px;width:14px;height:1.200px"></div>
</div>
<!-- thumb 6 (selected) -->
<div class="abs" style="left:23px;top:490.300px;width:104px;height:60px;background:#c1462b;"></div>
<div class="th" style="top:493px;left:25.500px;width:99px;">
 <svg class="bg" width="99" height="55"><use href="#facet" width="99" height="55"/></svg>
 <div class="abs" style="left:83px;top:0;width:16px;height:15.500px;background:#fff;"></div>
 <div class="abs" style="left:85px;top:5px;width:6px;height:1px;background:#8a9098;"></div><div class="abs" style="left:85px;top:7.500px;width:9px;height:1.500px;background:#7b2d43;"></div><div class="abs" style="left:85px;top:10.500px;width:11px;height:1px;background:#8a9098;"></div>
 <div class="ti" style="left:4px;width:78px;font-size:4.900px;">Опанування лексики</div>
 <div class="lb" style="left:10px;top:14.500px;width:29px;height:1.200px"></div>
 <div class="lb" style="left:10px;top:18.500px;width:68px;height:1.200px"></div>
 <div class="bu" style="left:10px;top:22.500px"></div><div class="ln" style="left:13px;top:22.500px;width:76px"></div><div class="ln" style="left:13px;top:25px;width:12px"></div>
 <div class="bu" style="left:10px;top:29.500px"></div><div class="ln" style="left:13px;top:29.500px;width:76px"></div><div class="ln" style="left:13px;top:32px;width:76px"></div><div class="ln" style="left:13px;top:34.500px;width:30px"></div>
 <div class="bu" style="left:10px;top:39px"></div><div class="ln" style="left:13px;top:39px;width:76px"></div><div class="ln" style="left:13px;top:41.500px;width:16px"></div>
</div>
<!-- thumb 7 -->
<div class="th" style="top:562.600px">
 <svg class="bg" width="98" height="55"><use href="#facet" width="98" height="55"/></svg>
 <div class="abs" style="left:79px;top:0;width:19px;height:11px;background:#f3f3f6;"></div>
 <div class="abs" style="left:81px;top:3px;width:15px;height:2px;background:#3a55b0;"></div><div class="abs" style="left:81px;top:6px;width:15px;height:2px;background:#d8403a;"></div>
 <div class="ti" style="left:5px;width:78px;font-size:5px;">Комунікативний підхід</div>
 <div class="lb" style="left:6px;top:13.500px;width:86px;height:2px"></div><div class="lb" style="left:6px;top:16.500px;width:86px;height:2px"></div><div class="lb" style="left:6px;top:19.500px;width:86px;height:2px"></div><div class="lb" style="left:18px;top:22.500px;width:74px;height:2px"></div><div class="lb" style="left:48px;top:25px;width:44px;height:1.500px"></div>
 <div class="bu" style="left:6px;top:29px"></div><div class="ln" style="left:9px;top:29px;width:80px"></div><div class="ln" style="left:9px;top:31.500px;width:10px"></div>
 <div class="bu" style="left:6px;top:35px"></div><div class="ln" style="left:9px;top:35px;width:80px"></div><div class="ln" style="left:9px;top:37.500px;width:14px"></div>
 <div class="bu" style="left:6px;top:41px"></div><div class="ln" style="left:9px;top:41px;width:80px"></div><div class="ln" style="left:9px;top:43.500px;width:60px"></div>
 <div class="bu" style="left:6px;top:47px"></div><div class="ln" style="left:9px;top:47px;width:54px"></div>
</div>
<!-- thumb 8 (clipped by status bar) -->
<div class="th" style="top:632.600px;height:24.900px;">
 <svg class="bg" width="98" height="55"><use href="#facet" width="98" height="55"/></svg>
 <div class="abs" style="left:78px;top:0;width:20px;height:17px;background:#f3ecdf;"></div>
 <div class="abs" style="left:85px;top:4px;width:6px;height:10px;background:#2b62c0;border-radius:2px 2px 0 0;"></div><div class="abs" style="left:86.500px;top:1.500px;width:3px;height:3px;border-radius:50%;background:#d9a98a;"></div>
 <div class="ti" style="left:2px;width:78px;font-size:5px;">Залучення носіїв мови</div>
 <div class="lb" style="left:7px;top:16.500px;width:8px;height:1px"></div>
 <div class="bu" style="left:7px;top:20px"></div><div class="ln" style="left:10px;top:20px;width:32px"></div>
</div>
<!-- ============ MAIN SLIDE ============ -->
<svg width="0" height="0" style="left:0;top:0">
 <defs>
  <symbol id="facet" viewBox="0 0 615 345" preserveAspectRatio="none">
   <rect width="615" height="345" fill="#fff"/>
   <path d="M472.700 0 L534.200 345" stroke="#9c9c9c" stroke-width=".7" fill="none"/>
   <path d="M615 185.700 L374.600 345" stroke="#b5b5b5" stroke-width=".7" fill="none"/>
   <path d="M566.300 0 H615 V345 H463.100 Z" fill="#90c226" fill-opacity=".3"/>
   <path d="M484.400 0 H615 V345 H545 Z" fill="#90c226" fill-opacity=".2"/>
   <path d="M615 153.300 V345 H450.600 Z" fill="#54a021" fill-opacity=".72"/>
   <path d="M470.900 0 H615 V345 H595.700 Z" fill="#3f7819" fill-opacity=".7"/>
   <path d="M601.200 0 H615 V345 H549.800 Z" fill="#c0e474" fill-opacity=".7"/>
   <path d="M551.800 0 H615 V345 H607.800 Z" fill="#90c226" fill-opacity=".65"/>
   <path d="M615 181.100 V345 H523.200 Z" fill="#90c226" fill-opacity=".8"/>
   <path d="M0 202.400 V345 H22.600 Z" fill="#90c226" fill-opacity=".85"/>
  </symbol>
 </defs>
</svg>
<div class="abs" style="left:245px;top:276px;width:617px;height:347px;background:#cfcfcf;"></div>
<svg style="left:246px;top:277px" width="615" height="345"><use href="#facet" width="615" height="345"/></svg>
<!-- picture -->
<div class="abs" style="left:763px;top:277px;width:98px;height:97px;background:#fff;"></div>
<span class="t" style="left:770.6px;top:295.0px;font-size:19.5px;color:#66717b;transform:scaleX(0.862);transform-origin:0 0;">Learn</span>
<span class="t" style="left:770.6px;top:315.3px;font-size:19.5px;color:#7b2d43;transform:scaleX(0.862);transform-origin:0 0;font-weight:bold;">English</span>
<span class="t" style="left:770.6px;top:336.7px;font-size:19.5px;color:#66717b;transform:scaleX(0.863);transform-origin:0 0;">Vocabulary</span>
<!-- mouse cursor -->
<svg style="left:730px;top:320px" width="10" height="15" viewBox="0 0 10 15"><path d="M.7 .7 V12 L3.300 9.600 L5.200 13.800 L6.900 13 L5 9 H8.600 Z" fill="#fff" stroke="#555" stroke-width=".8"/></svg>
<!-- slide text -->
<style>
.jl{position:absolute;left:322.500px;width:484px;font-size:15.300px;line-height:18px;height:18px;white-space:nowrap;color:#111;text-align:justify;text-align-last:justify;}
.jl.l{text-align-last:left;}
.jl u{text-decoration:underline solid #6e5c5c;text-decoration-thickness:.8px;text-underline-offset:1.800px;text-decoration-skip-ink:none;background:repeating-linear-gradient(90deg,#ee3a3a 0,#ee3a3a 1px,transparent 1px,transparent 2.500px) 0 100%/100% 1.700px no-repeat;}
.bul{position:absolute;left:306px;width:0;height:0;border-left:9.500px solid #90c226;border-top:5px solid transparent;border-bottom:5px solid transparent;margin-top:-.800px;}
</style>
<span class="t" style="left:372px;top:302.5px;font-size:29px;color:#90c226;letter-spacing:-0.57px;font-weight:bold;font-style:italic;">Опанування лексики</span>
<span class="t" style="left:306px;top:362.7px;font-size:15.3px;color:#111;letter-spacing:0.05px;font-weight:bold;font-style:italic;">Питання від здобувача:</span>
<span class="t" style="left:306px;top:387.6px;font-size:15.3px;color:#111;letter-spacing:0.02px;font-weight:bold;font-style:italic;">«Скільки слів треба вивчити, щоб оволодіти мовою?»</span>
<div class="bul" style="top:416.500px"></div>
<div class="jl" style="top:410.500px"><u>Вивчення</u> <u>лексичного</u> <u>матеріалу</u> <u>здійснюється</u> на <u>основі</u> <u>шкільної</u></div>
<div class="jl l" style="top:429.200px">лексики</div>
<div class="bul" style="top:460px"></div>
<div class="jl" style="top:454px">У ЗВО лексика, яку <u>опановано</u> у <u>школі</u>, <u>доповнюється</u> за <u>рахунок</u></div>
<div class="jl" style="top:472.700px">лексики, <u>пов’язаної</u> з <u>побутом</u> <u>студентів</u>, <u>професійної</u> та</div>
<div class="jl l" style="top:491.400px"><u>загальнонаукової</u> лексики</div>
<div class="bul" style="top:522px"></div>
<div class="jl" style="top:516px"><u>«Активний»</u> <u>словниковий</u> запас, як правило, <u>помітно</u> <u>поступається</u></div>
<div class="jl l" style="top:534.700px"><u>«пасивному»</u>.</div>
<!-- ============ RIGHT SCROLLBAR / NOTES / STATUS ============ -->
<div class="abs" style="left:953px;top:269px;width:11px;height:314px;background:#f0f0f0;"></div>
<div class="abs" style="left:953px;top:270px;width:10px;height:10px;background:#fff;border:1px solid #d0d0d0;box-sizing:border-box;"></div>
<svg style="left:954.500px;top:272px" width="7" height="5" viewBox="0 0 7 5"><path d="M.5 4.500 L3.500 .8 L6.500 4.500 Z" fill="#111"/></svg>
<div class="abs" style="left:953px;top:383px;width:10px;height:19px;background:#fff;border:1px solid #ababab;box-sizing:border-box;"></div>
<div class="abs" style="left:953px;top:583.500px;width:10px;height:10px;background:#fff;border:1px solid #d0d0d0;box-sizing:border-box;"></div>
<svg style="left:954.500px;top:586.500px" width="7" height="5" viewBox="0 0 7 5"><path d="M.5 .5 L3.500 4.200 L6.500 .5 Z" fill="#111"/></svg>
<svg style="left:954px;top:596px" width="8" height="22" viewBox="0 0 9 24"><path d="M1 5 L4.500 1 L8 5 Z M1 9 L4.500 5 L8 9 Z M1 13 L4.500 17 L8 13 Z M1 17 L4.500 21 L8 17 Z" fill="#666"/></svg>
<!-- notes splitter -->
<div class="abs" style="left:152px;top:633px;width:812px;height:1px;background:#c6c6c6;"></div>
<span class="t" style="left:160px;top:639.9px;font-size:10.8px;color:#555;letter-spacing:-0.23px;">Щелкните, чтобы добавить заметки</span>
<!-- status bar -->
<div class="abs" style="left:0;top:657px;width:964px;height:16px;background:#f3f3f3;border-top:1px solid #cfcfcf;box-sizing:border-box;"></div>
<span class="t" style="left:6px;top:662.0px;font-size:8.4px;color:#444;letter-spacing:-0.36px;">Слайд 6 из 15</span>
<svg style="left:69px;top:659px" width="12" height="11" viewBox="0 0 12 11"><path d="M1 1.500 Q3.500 .5 5.500 2 V9.500 Q3.500 8.300 1 9 Z M5.500 2 Q7.500 .5 10 1.500 V5.500 M5.500 9.500 Q6.500 8.800 7.500 8.800" fill="none" stroke="#6a6a6a" stroke-width=".9"/><path d="M8 8 L11 4.500" stroke="#6a6a6a" stroke-width="1"/></svg>
<span class="t" style="left:91px;top:661.7px;font-size:8.8px;color:#222;letter-spacing:-0.26px;">русский (Украина)</span>
<svg style="left:171px;top:659px" width="12" height="12" viewBox="0 0 12 12"><path d="M8.500 2.500 A4 4 0 1 0 8.500 8.500" fill="none" stroke="#444" stroke-width=".9" stroke-dasharray="1.800 1.200"/><circle cx="7" cy="3" r="1" fill="#444"/><path d="M4.500 5 H9.500 M7 5 V7.500 M7 7.500 L5 10.500 M7 7.500 L9.500 10.500" stroke="#444" stroke-width=".9" fill="none"/></svg>
<span class="t" style="left:185px;top:661.7px;font-size:8.8px;color:#222;letter-spacing:-0.27px;">Специальные возможности: проверьте рекомендации</span>
<svg style="left:578px;top:660px" width="10" height="10" viewBox="0 0 10 10"><path d="M1 6.500 H9 M1 8.500 H9 M2 4.500 H8 L5 1.500 Z" stroke="#6a6a6a" fill="#6a6a6a" stroke-width=".8"/></svg>
<span class="t" style="left:591px;top:661.7px;font-size:8.8px;color:#222;letter-spacing:-0.38px;">Заметки</span>
<svg style="left:635px;top:660px" width="11" height="10" viewBox="0 0 11 10"><path d="M.5 .5 H10.500 V6.500 H4.500 L2.500 9 V6.500 H.5 Z" fill="#444"/></svg>
<span class="t" style="left:648px;top:661.7px;font-size:8.8px;color:#222;letter-spacing:-0.18px;">Примечания</span>
<div class="abs" style="left:710px;top:658px;width:29px;height:15px;background:#d2d2d2;"></div>
<svg style="left:716px;top:659px" width="100" height="13" viewBox="0 0 100 13">
 <g fill="none" stroke="#6a6a6a" stroke-width=".9">
  <rect x="2.500" y="2.500" width="11" height="8"/><path d="M5.500 2.500 V10.500 M2.500 5 H5.500 M2.500 7.500 H5.500"/>
  <rect x="32.500" y="2" width="3.500" height="3"/><rect x="38.500" y="2" width="3.500" height="3"/><rect x="32.500" y="7.500" width="3.500" height="3"/><rect x="38.500" y="7.500" width="3.500" height="3"/>
  <path d="M60.500 2.500 Q63 1.500 65.500 3 V10.500 Q63 9.300 60.500 10 Z M65.500 3 Q68 1.500 70.500 2.500 V10 Q68 9.300 65.500 10.500"/>
  <path d="M88 2.500 H99 M89.500 2.500 V8 H97.500 V2.500 M93.500 8 V10.500 M91 10.500 H96"/>
 </g>
</svg>
<svg style="left:830px;top:660px" width="95" height="11" viewBox="0 0 95 11">
 <path d="M2 5.500 H7 M80 5.500 H86 M83 2.500 V8.500" stroke="#6a6a6a" stroke-width="1"/>
 <path d="M12 5.500 H77" stroke="#8a8a8a" stroke-width="1"/>
 <rect x="29" y="1" width="3" height="9" fill="#444"/><path d="M44.500 3.500 V7.500" stroke="#666" stroke-width="1"/>
</svg>
<span class="t" style="left:925px;top:662.0px;font-size:8.4px;color:#222;letter-spacing:-0.26px;">68%</span>
<svg style="left:951px;top:660px" width="8.500" height="8.500" viewBox="0 0 10 10"><rect x=".5" y=".5" width="9" height="9" fill="none" stroke="#6a6a6a" stroke-width=".9"/><path d="M2.500 4 V2.500 H4 M6 2.500 H7.500 V4 M7.500 6 V7.500 H6 M4 7.500 H2.500 V6" fill="none" stroke="#6a6a6a" stroke-width=".9"/></svg>
<!-- ============ ZOOM CONTROLS ============ -->
<div class="abs" style="left:0;top:673px;width:964px;height:68px;background:#1a1a1a;"></div>
<!-- annotate pencil -->
<div class="abs" style="left:8px;top:664px;width:29px;height:29px;border-radius:50%;background:#1c1e1d;"></div>
<svg style="left:15px;top:671px" width="15" height="15" viewBox="0 0 15 15"><path d="M2.500 12.500 L3.300 9.300 L10 2.600 Q11 1.600 12 2.600 L12.400 3 Q13.400 4 12.400 5 L5.700 11.700 Z M9 3.600 L11.400 6" fill="none" stroke="#25d366" stroke-width="1.300" stroke-linejoin="round"/></svg>
<!-- unmute -->
<svg style="left:24px;top:703px" width="20" height="21" viewBox="0 0 20 21">
 <rect x="7" y="1.500" width="6" height="11" rx="3" fill="#bdbdbd"/><path d="M4.500 9 Q4.500 15 10 15 Q15.500 15 15.500 9 M10 15 V18.500 M7 18.500 H13" fill="none" stroke="#bdbdbd" stroke-width="1.300"/>
 <path d="M2.500 18 L17.500 1.500" stroke="#e0364a" stroke-width="1.400"/>
</svg>
<span class="t" style="left:18px;top:726.4px;font-size:9.4px;color:#cbcbcb;letter-spacing:-0.32px;font-weight:bold;">Unmute</span>
<svg style="left:54px;top:711px" width="8" height="5" viewBox="0 0 8 5"><path d="M1 4.200 L4 1.200 L7 4.200" fill="none" stroke="#cfcfcf" stroke-width="1.100"/></svg>
<!-- stop video -->
<svg style="left:95px;top:708px" width="20" height="12" viewBox="0 0 20 12"><rect x=".5" y=".8" width="13" height="10.400" rx="2.200" fill="#bdbdbd"/><path d="M14.500 4.200 L18.500 1.500 Q19.300 1.200 19.300 2 V10 Q19.300 10.800 18.500 10.500 L14.500 7.800 Z" fill="#bdbdbd"/></svg>
<span class="t" style="left:82.5px;top:726.6px;font-size:9.2px;color:#cbcbcb;letter-spacing:-0.38px;font-weight:bold;">Stop Video</span>
<svg style="left:128px;top:711px" width="8" height="5" viewBox="0 0 8 5"><path d="M1 4.200 L4 1.200 L7 4.200" fill="none" stroke="#cfcfcf" stroke-width="1.100"/></svg>
<!-- participants -->
<svg style="left:344px;top:706px" width="20" height="16" viewBox="0 0 20 16"><circle cx="6.500" cy="4.500" r="3.300" fill="#bdbdbd"/><path d="M.5 14.500 Q.5 9 6.500 9 Q12.500 9 12.500 14.500 Z" fill="#bdbdbd"/><circle cx="14" cy="5.500" r="2.700" fill="#bdbdbd"/><path d="M13.300 10 Q19.500 9.500 19.500 14.500 H13.800 Q13.800 11.500 12.300 10.200 Z" fill="#bdbdbd"/></svg>
<span class="t" style="left:367px;top:707.8px;font-size:9.1px;color:#d6d6d6;letter-spacing:-0.31px;">25</span>
<span class="t" style="left:330.5px;top:726.8px;font-size:9px;color:#cbcbcb;letter-spacing:-0.38px;font-weight:bold;">Participants</span>
<svg style="left:390px;top:711px" width="8" height="5" viewBox="0 0 8 5"><path d="M1 4.200 L4 1.200 L7 4.200" fill="none" stroke="#cfcfcf" stroke-width="1.100"/></svg>
<!-- chat -->
<svg style="left:428px;top:706px" width="17" height="16" viewBox="0 0 17 16"><path d="M3 1 H14 Q16.500 1 16.500 3.500 V9 Q16.500 11.500 14 11.500 H8 L4.500 14.800 V11.500 H3 Q.5 11.500 .5 9 V3.500 Q.5 1 3 1 Z" fill="#bdbdbd"/></svg>
<span class="t" style="left:428px;top:727.0px;font-size:8.8px;color:#cbcbcb;letter-spacing:-0.39px;font-weight:bold;">Chat</span>
<svg style="left:457px;top:711px" width="8" height="5" viewBox="0 0 8 5"><path d="M1 4.200 L4 1.200 L7 4.200" fill="none" stroke="#cfcfcf" stroke-width="1.100"/></svg>
<!-- share screen -->
<div class="abs" style="left:498px;top:707px;width:19px;height:13px;border-radius:3px;background:#23d160;"></div>
<svg style="left:503px;top:709px" width="9" height="9" viewBox="0 0 9 9"><path d="M4.500 8 V1.800 M1.800 4.300 L4.500 1.500 L7.200 4.300" fill="none" stroke="#14331f" stroke-width="1.400"/></svg>
<span class="t" style="left:481.5px;top:727.0px;font-size:8.8px;color:#2fd566;letter-spacing:-0.40px;font-weight:bold;">Share Screen</span>
<!-- record -->
<svg style="left:566px;top:705px" width="17" height="17" viewBox="0 0 17 17"><circle cx="8.500" cy="8.500" r="7.300" fill="none" stroke="#bdbdbd" stroke-width="1.200"/><circle cx="8.500" cy="8.500" r="5" fill="#bdbdbd"/></svg>
<span class="t" style="left:561px;top:727.1px;font-size:8.6px;color:#cbcbcb;letter-spacing:-0.43px;font-weight:bold;">Record</span>
<!-- reactions -->
<svg style="left:625px;top:704px" width="20" height="18" viewBox="0 0 20 18"><circle cx="9" cy="10" r="6.800" fill="#bdbdbd"/><circle cx="6.600" cy="8.500" r="1" fill="#1a1a1a"/><circle cx="11.400" cy="8.500" r="1" fill="#1a1a1a"/><path d="M5.800 11.500 Q9 14.800 12.200 11.500" fill="none" stroke="#1a1a1a" stroke-width="1.100"/><circle cx="16" cy="3.500" r="3.300" fill="#1a1a1a"/><path d="M16 1 V6 M13.500 3.500 H18.500" stroke="#bdbdbd" stroke-width="1.200"/></svg>
<span class="t" style="left:615px;top:727.0px;font-size:8.8px;color:#cbcbcb;letter-spacing:-0.39px;font-weight:bold;">Reactions</span>
<!-- apps -->
<svg style="left:687px;top:706px" width="15" height="15" viewBox="0 0 15 15"><path d="M5 1.500 H3.500 Q1.500 1.500 1.500 3.500 V5 M10 13.500 H11.500 Q13.500 13.500 13.500 11.500 V10 M9 1.500 H10" fill="none" stroke="#bdbdbd" stroke-width="1.300"/><circle cx="11.800" cy="3.200" r="1.800" fill="none" stroke="#bdbdbd" stroke-width="1.200"/><circle cx="3.200" cy="11.800" r="1.800" fill="none" stroke="#bdbdbd" stroke-width="1.200"/></svg>
<span class="t" style="left:685px;top:727.1px;font-size:8.6px;color:#cbcbcb;letter-spacing:-0.37px;font-weight:bold;">Apps</span>
<!-- leave -->
<div class="abs" style="left:909px;top:711px;width:46px;height:20px;border-radius:5px;background:#c4242c;"></div>
<span class="t" style="left:919px;top:715.9px;font-size:9.6px;color:#fff;letter-spacing:-0.34px;font-weight:bold;">Leave</span>
<!-- ============ WINDOWS TASKBAR ============ -->
<div class="abs" style="left:0;top:740.700px;width:964px;height:31.300px;background:linear-gradient(90deg,#222b33 0%,#2a333c 22%,#29323a 45%,#252d35 53%,#2a312d 60%,#29302c 70%,#1c2d33 78%,#182c3a 88%,#192b39 100%);"></div>
<div class="abs" style="left:517px;top:740.700px;width:36px;height:31px;background:#4a5259;"></div>
<!-- running indicators -->
<div class="abs" style="left:262px;top:769px;width:29px;height:2px;background:#8fc4ea;"></div>
<div class="abs" style="left:299px;top:769px;width:29px;height:2px;background:#8fc4ea;"></div>
<div class="abs" style="left:372px;top:769px;width:29px;height:2px;background:#8fc4ea;"></div>
<div class="abs" style="left:483px;top:769px;width:29px;height:2px;background:#8fc4ea;"></div>
<div class="abs" style="left:517px;top:769px;width:36px;height:2px;background:#8fc4ea;"></div>
<div class="abs" style="left:0;top:770.800px;width:964px;height:1.200px;background:#f4f6f8;"></div>
<svg style="left:0;top:741px" width="964" height="31" viewBox="0 0 964 31">
 <!-- start -->
 <path d="M12 10.300 L17 9.600 V14.700 H12 Z M18 9.500 L24.500 8.600 V14.700 H18 Z M12 15.700 H17 V20.800 L12 20.100 Z M18 15.700 H24.500 V21.800 L18 20.900 Z" fill="#fff"/>
 <!-- search -->
 <circle cx="56.500" cy="13" r="4.300" fill="none" stroke="#fff" stroke-width="1.300"/><path d="M53.500 16.200 L48.500 21.500" stroke="#fff" stroke-width="1.400"/>
 <!-- task view -->
 <g fill="none" stroke="#fff" stroke-width="1.100"><rect x="85.500" y="11.500" width="7" height="7"/><path d="M84 9.500 H94 M84 20.500 H94 M95.500 10 V13 M95.500 15 V20"/></g>
 <!-- blue stacked app -->
 <path d="M120 13 L129 8.500 L138 13 L129 17.500 Z" fill="#2f7fd8"/><path d="M120 16 L129 20.500 L138 16 V18 L129 22.500 L120 18 Z" fill="#3f97ea"/><path d="M120 19.500 L129 24 L138 19.500 V20.500 L129 25 L120 20.500 Z" fill="#9bd0ff"/><path d="M123 13 H125 M127 12 H129 M131 13 H133" stroke="#fff" stroke-width="1.200"/>
 <!-- scanner / printer -->
 <path d="M159 17 L165 10 H174 L170 17 Z" fill="#e8e8e8"/><path d="M157 18 H171 L174 14 V20 L171 24 H157 Z" fill="#8d9399"/><path d="M158 19 H170 V22 H158 Z" fill="#3a3f44"/><path d="M164 11 L171 11" stroke="#9aa" stroke-width=".8"/>
 <!-- explorer -->
 <path d="M194 10 H200 L202 12 H211 V24 H194 Z" fill="#f4c542"/><rect x="194" y="14" width="17" height="10" fill="#fbdc72"/><rect x="198" y="18" width="9" height="6" fill="#3a8fe0"/><rect x="199.500" y="20" width="6" height="4" fill="#fbdc72"/>
 <!-- firefox -->
 <circle cx="239" cy="15.500" r="8.500" fill="#ff9a1f"/><path d="M232 10 Q234 6 238 6.500 Q244 4 247 10 Q249 16 246 20.500 Q242 25 236 23.500 Q231 21 230.500 16 Q230.500 12.500 232 10 Z" fill="#ff7139"/><circle cx="239.500" cy="16" r="4.500" fill="#7a3fd9"/><path d="M233 11 Q236 8 240 10.500 Q236.500 11 236 14 Q235 17 238 19" fill="none" stroke="#ffd43b" stroke-width="1.600"/><path d="M235 6 Q236.500 8.500 239 8.500" stroke="#ffbd2e" stroke-width="1.500" fill="none"/>
 <!-- opera -->
 <ellipse cx="276.500" cy="15.500" rx="8.800" ry="9" fill="#e8202a"/><ellipse cx="276.500" cy="15.500" rx="3.600" ry="6.300" fill="#252e37"/><path d="M272 8 Q267.500 15.500 272 23" stroke="#ff5a5a" stroke-width=".8" fill="none"/>
 <!-- chrome -->
 <circle cx="313" cy="15.500" r="9" fill="#ffce44"/><path d="M313 6.500 A9 9 0 0 1 320.800 11 H313 Z M313 6.500 A9 9 0 0 0 305.200 11 L309 17.500 L313 11 Z" fill="#e33b2e"/><path d="M305.200 11 A9 9 0 0 0 311 24.300 L316 17.800 L309.500 17.500 Z" fill="#2ba24c"/><path d="M313 6.500 A9 9 0 0 1 320.800 11 H313 Z" fill="#e33b2e"/><circle cx="313" cy="15.500" r="4.200" fill="#fff"/><circle cx="313" cy="15.500" r="3.300" fill="#4285f4"/>
 <!-- telegram -->
 <circle cx="350" cy="15.500" r="8.300" fill="#2aa3dd"/><path d="M345 15.300 L354.500 11.300 L353 20.200 L350.300 18.200 L348.800 19.800 L348.600 17.300 L352.500 13.500 L347.600 16.400 Z" fill="#fff"/>
 <!-- viber -->
 <path d="M380.500 9 Q387 6 393.500 9 Q395.500 14 393.500 19.500 Q390.500 22.500 385 22 L382.500 24.500 V21.500 Q379.500 19.500 379.500 14 Q379.500 10.500 380.500 9 Z" fill="#8a62c8" stroke="#efe6fa" stroke-width="1.100"/><path d="M384.300 11.200 Q383 12.500 384.800 15.200 Q387 18.200 389.300 18.600 Q390.600 18.200 390.600 17 L389 15.800 L388 16.500 Q386.500 15.600 385.800 14 L386.600 13.200 L385.600 11.300 Z" fill="#fff"/><path d="M387.500 10.500 Q391 11 391.300 14.500" stroke="#fff" stroke-width=".8" fill="none"/>
 <!-- skype -->
 <circle cx="424" cy="15.500" r="8.500" fill="#10a7e8"/><circle cx="419" cy="10.500" r="3.500" fill="#10a7e8"/><circle cx="429" cy="20.500" r="3.500" fill="#10a7e8"/>
 <!-- teams -->
 <circle cx="467" cy="10.500" r="2.500" fill="#7b83eb"/><rect x="462" y="13.500" width="8.500" height="9" rx="2" fill="#7b83eb"/><circle cx="461" cy="9.500" r="3" fill="#5059c9"/><rect x="453.500" y="11" width="10.500" height="10.500" rx="1.500" fill="#4b53bc"/>
 <!-- word -->
 <rect x="493" y="8" width="12" height="15" rx="1" fill="#e8edf5"/><path d="M500 11 H504 M500 14 H504 M500 17 H504 M500 20 H504" stroke="#2b579a" stroke-width="1.200"/><rect x="489.500" y="10" width="10" height="11" rx="1" fill="#2b5fb4"/>
 <!-- zoom -->
 <circle cx="535" cy="14.500" r="9" fill="#1a6ff0"/>
 <!-- weather -->
 <path d="M681 22.500 Q677.500 22.500 677.500 19.500 Q677.500 16.500 681 16.500 Q682 12.500 686.500 12.500 Q691 12.500 692 16 Q697.500 16 697.500 19.500 Q697.500 22.500 694 22.500 Z" fill="#dfe8f3"/><path d="M683 22.500 Q680.500 21 682 18.500 Q686 16 691 18.500 Q696 19 697 21 Q696 22.500 694 22.500 Z" fill="#a9c2e4"/><circle cx="693.500" cy="10.500" r="2.200" fill="#e43a2f"/>
 <!-- tray -->
 <path d="M743 18 L747.500 13.500 L752 18" fill="none" stroke="#fff" stroke-width="1.200"/>
 <g fill="none" stroke="#fff" stroke-width="1"><rect x="762.500" y="12.500" width="6" height="7" rx="1"/><path d="M768.500 15 L771.500 13.500 V18.500 L768.500 17 M763.500 10.500 H767.500 M763.500 21.500 H767.500"/></g>
 <rect x="780.500" y="9" width="5" height="9.500" rx="2.500" fill="#fff"/><path d="M778.500 15.500 Q778.500 20.500 783 20.500 Q787.500 20.500 787.500 15.500 M783 20.500 V22.500" fill="none" stroke="#fff" stroke-width="1"/>
 <rect x="796.500" y="10.500" width="10.500" height="9.500" rx="1" fill="none" stroke="#fff" stroke-width="1"/><path d="M799 17.500 L801 14.500 L803 16.500 L804.500 14.500" fill="none" stroke="#fff" stroke-width=".9"/><circle cx="805.500" cy="20" r="2.600" fill="#f59b23"/>
 <g fill="none" stroke="#fff" stroke-width="1"><rect x="816.500" y="10.500" width="10" height="7"/><path d="M819 20.500 H824 M821.500 17.500 V20.500"/><rect x="814.500" y="9.500" width="3" height="5" fill="#1a2a30"/></g>
 <g fill="none" stroke="#fff" stroke-width="1"><path d="M832.500 13.500 H834.500 L837.500 11 V20 L834.500 17.500 H832.500 Z"/><path d="M839.500 13 Q841 15.500 839.500 18 M841.500 11.500 Q844 15.500 841.500 19.500"/><path d="M843.800 10.500 Q846.800 15.500 843.800 20.500" stroke="#8a959c"/></g>
 <!-- notifications -->
 <path d="M933 9.500 H945.500 V20 H941 L938.500 22.500 V20 H933 Z" fill="#fff"/><path d="M935 12.500 H943.500 M935 15 H943.500 M935 17.500 H941" stroke="#1a2a36" stroke-width=".9"/>
 <circle cx="944" cy="21.300" r="5.200" fill="#1b2831" stroke="#fff" stroke-width=".9"/>
 <path d="M959.500 0 V31" stroke="#55626c" stroke-width="1"/>
</svg>
<span class="t" style="left:421.2px;top:750.8px;font-size:11.5px;color:#fff;letter-spacing:-1.67px;font-weight:bold;">S</span>
<span class="t" style="left:455.5px;top:752.3px;font-size:8.5px;color:#fff;letter-spacing:0.80px;font-weight:bold;">T</span>
<span class="t" style="left:491px;top:752.3px;font-size:8.5px;color:#fff;letter-spacing:-0.53px;font-weight:bold;">W</span>
<span class="t" style="left:529.5px;top:753.2px;font-size:4.5px;color:#fff;letter-spacing:-0.19px;font-weight:bold;">zoom</span>
<span class="t" style="left:702.5px;top:750.2px;font-size:11px;color:#fff;transform:scaleX(0.875);transform-origin:0 0;">10°C</span>
<span class="t" style="left:853px;top:751.0px;font-size:9.8px;color:#fff;transform:scaleX(0.839);transform-origin:0 0;">УКР</span>
<span class="t" style="left:889px;top:744.0px;font-size:9.8px;color:#fff;transform:scaleX(0.803);transform-origin:0 0;">13:24</span>
<span class="t" style="left:879.5px;top:758.0px;font-size:9.8px;color:#fff;transform:scaleX(0.816);transform-origin:0 0;">16.03.2023</span>
<span class="t" style="left:942px;top:758.1px;font-size:8.5px;color:#fff;transform:scaleX(0.845);transform-origin:0 0;font-weight:bold;">1</span>
</body>
</html>
